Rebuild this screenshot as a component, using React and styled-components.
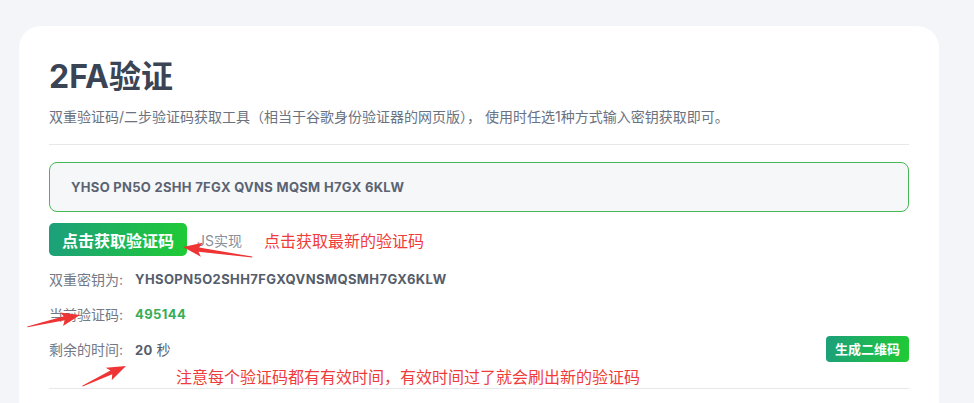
import React from 'react';
import styled, { createGlobalStyle } from 'styled-components';

const GlobalStyle = createGlobalStyle`
  body {
    margin: 0;
    background: #f4f5f9;
    font-family: Inter, "Noto Sans CJK SC", sans-serif;
  }
`;

const Page = styled.div`
  padding: 26px 0 0 19px;
  height: 377px;
  overflow: hidden;
`;

const Card = styled.div`
  position: relative;
  width: 860px;
  padding: 26px 30px 40px;
  background: #fff;
  border-radius: 22px 22px 0 0;
`;

const Title = styled.h1`
  margin: 0;
  font-size: 32px;
  line-height: 50px;
  font-weight: 700;
  color: #3a4454;
`;

const Desc = styled.p`
  margin: 4px 0 0;
  font-size: 14px;
  line-height: 22px;
  color: #6b7280;
`;

const Divider = styled.div`
  height: 1px;
  background: #e6e8ea;
  margin-top: ${p => p.top || 0}px;
`;

const KeyBox = styled.div`
  margin-top: 17px;
  height: 48px;
  display: flex;
  align-items: center;
  padding: 0 21px;
  border: 1px solid #45b855;
  border-radius: 8px;
  background: #f6f7f9;
  font-size: 13px;
  font-weight: 700;
  color: #5b6372;
  letter-spacing: 0.3px;
`;

const ActionRow = styled.div`
  margin-top: 11px;
  display: flex;
  align-items: center;
  height: 33px;
`;

const GreenButton = styled.button`
  border: none;
  border-radius: ${p => (p.small ? 4 : 5)}px;
  background: linear-gradient(100deg, #1c9f7c, #1fcb34);
  color: #fff;
  font-family: inherit;
  font-weight: 700;
  font-size: ${p => (p.small ? 13 : 16)}px;
  height: ${p => (p.small ? 26 : 33)}px;
  padding: 0 ${p => (p.small ? 9 : 13)}px;
  margin-left: ${p => (p.small ? 'auto' : '0')};
  cursor: pointer;
`;

const JsLink = styled.span`
  margin-left: 10px;
  font-size: 14px;
  color: #8a909a;
`;

const Note = styled.span`
  margin-left: ${p => p.indent || 0}px;
  font-size: 16px;
  color: #f03b3b;
`;

const NoteLine = styled.div`
  padding-left: 127px;
  height: 20px;
  display: flex;
  align-items: center;
`;

const InfoRow = styled.div`
  display: flex;
  align-items: center;
  height: 35px;
  margin-top: ${p => p.top || 0}px;
`;

const Label = styled.span`
  width: 86px;
  font-size: 14px;
  color: #737a86;
`;

const Value = styled.span`
  font-size: 13px;
  font-weight: 700;
  color: ${p => (p.green ? '#38ad57' : '#555d6b')};
  letter-spacing: ${p => (p.wide ? '0.4px' : '0.3px')};
`;

const Unit = styled.span`
  margin-left: 4px;
  font-weight: 400;
  font-size: 14px;
`;

const ArrowSvg = styled.svg`
  position: absolute;
  left: ${p => p.x}px;
  top: ${p => p.y - 8}px;
  transform-origin: 0 8px;
  transform: rotate(${p => p.angle}deg);
  overflow: visible;
`;

const Arrow = ({ x, y, len, angle }) => (
  <ArrowSvg x={x} y={y} angle={angle} width={len} height="16" viewBox={`0 0 ${len} 16`}>
    <polygon
      points={`0,8 19,1 16,6.2 ${len},7.6 ${len},8.6 16,10.4 19,15`}
      fill="#ee3434"
    />
  </ArrowSvg>
);

export default function App() {
  return (
    <Page>
      <GlobalStyle />
      <Card>
        <Title>2FA验证</Title>
        <Desc>双重验证码/二步验证码获取工具（相当于谷歌身份验证器的网页版）， 使用时任选1种方式输入密钥获取即可。</Desc>
        <Divider top={16} />
        <KeyBox>YHSO PN5O 2SHH 7FGX QVNS MQSM H7GX 6KLW</KeyBox>
        <ActionRow>
          <GreenButton>点击获取验证码</GreenButton>
          <JsLink>JS实现</JsLink>
          <Note indent={22}>点击获取最新的验证码</Note>
        </ActionRow>
        <InfoRow top={5}>
          <Label>双重密钥为:</Label>
          <Value wide>YHSOPN5O2SHH7FGXQVNSMQSMH7GX6KLW</Value>
        </InfoRow>
        <InfoRow>
          <Label>当前验证码:</Label>
          <Value green wide>495144</Value>
        </InfoRow>
        <InfoRow>
          <Label>剩余的时间:</Label>
          <Value>20<Unit>秒</Unit></Value>
          <GreenButton small>生成二维码</GreenButton>
        </InfoRow>
        <NoteLine>
          <Note>注意每个验证码都有有效时间，有效时间过了就会刷出新的验证码</Note>
        </NoteLine>
        <Divider top={2} />
        <Arrow x={164} y={221} len={70} angle={8.2} />
        <Arrow x={61} y={289} len={54} angle={167.2} />
        <Arrow x={107} y={340} len={48} angle={155.1} />
      </Card>
    </Page>
  );
}
